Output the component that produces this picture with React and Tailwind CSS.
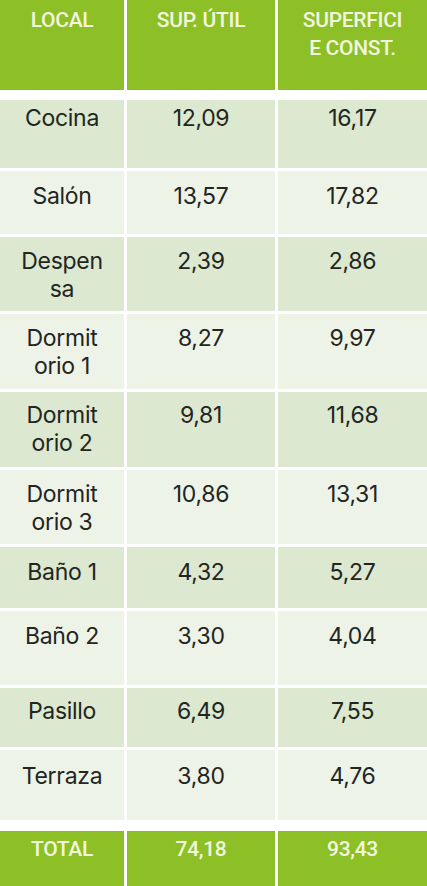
import React from "react";

const rows = [
  { l: ["Cocina"], a: "12,09", b: "16,17", h: "h-[68px]", bg: "bg-[#dce8cf]", pt: "pt-[4px]" },
  { l: ["Salón"], a: "13,57", b: "17,82", h: "h-[63px]", bg: "bg-[#eef3e8]", pt: "pt-[11px]" },
  { l: ["Despen", "sa"], a: "2,39", b: "2,86", h: "h-[74px]", bg: "bg-[#dce8cf]", pt: "pt-[10px]" },
  { l: ["Dormit", "orio 1"], a: "8,27", b: "9,97", h: "h-[75px]", bg: "bg-[#eef3e8]", pt: "pt-[10px]" },
  { l: ["Dormit", "orio 2"], a: "9,81", b: "11,68", h: "h-[75px]", bg: "bg-[#dce8cf]", pt: "pt-[9px]" },
  { l: ["Dormit", "orio 3"], a: "10,86", b: "13,31", h: "h-[74px]", bg: "bg-[#eef3e8]", pt: "pt-[10px]" },
  { l: ["Baño 1"], a: "4,32", b: "5,27", h: "h-[61px]", bg: "bg-[#dce8cf]", pt: "pt-[11px]" },
  { l: ["Baño 2"], a: "3,30", b: "4,04", h: "h-[74px]", bg: "bg-[#eef3e8]", pt: "pt-[11px]" },
  { l: ["Pasillo"], a: "6,49", b: "7,55", h: "h-[59px]", bg: "bg-[#dce8cf]", pt: "pt-[9px]" },
  { l: ["Terraza"], a: "3,80", b: "4,76", h: "h-[70px]", bg: "bg-[#eef3e8]", pt: "pt-[12px]" },
];

const body = "font-['Inter',sans-serif] text-[23px] leading-[28px] tracking-[-0.3px] text-[#222522] text-center";
const head = "font-['Roboto',sans-serif] font-medium text-[21px] leading-[28px] tracking-[-0.3px] text-[#f3f6df] text-center";

export default function App() {
  return (
    <div className="w-[427px] h-[886px] bg-white overflow-hidden flex flex-col">
      <div className="grid grid-cols-[124px_148px_1fr] gap-x-[3px] h-[90px]">
        <div className={`bg-[#8dc027] pt-[6px] ${head}`}>LOCAL</div>
        <div className={`bg-[#8dc027] pt-[6px] ${head}`}>SUP. ÚTIL</div>
        <div className={`bg-[#8dc027] pt-[6px] ${head}`}>
          <div>SUPERFICI</div>
          <div>E CONST.</div>
        </div>
      </div>
      <div className="mt-[10px] flex flex-col gap-y-[3px]">
        {rows.map((r, i) => (
          <div key={i} className={`grid grid-cols-[124px_148px_1fr] gap-x-[3px] ${r.h}`}>
            <div className={`${r.bg} ${r.pt} ${body}`}>
              {r.l.map((t, j) => (
                <div key={j}>{t}</div>
              ))}
            </div>
            <div className={`${r.bg} ${r.pt} ${body}`}>{r.a}</div>
            <div className={`${r.bg} ${r.pt} ${body}`}>{r.b}</div>
          </div>
        ))}
      </div>
      <div className="mt-[11px] grid grid-cols-[124px_148px_1fr] gap-x-[3px] h-[55px]">
        <div className={`bg-[#8dc027] pt-[4px] ${head}`}>TOTAL</div>
        <div className={`bg-[#8dc027] pt-[4px] ${head}`}>74,18</div>
        <div className={`bg-[#8dc027] pt-[4px] ${head}`}>93,43</div>
      </div>
    </div>
  );
}
